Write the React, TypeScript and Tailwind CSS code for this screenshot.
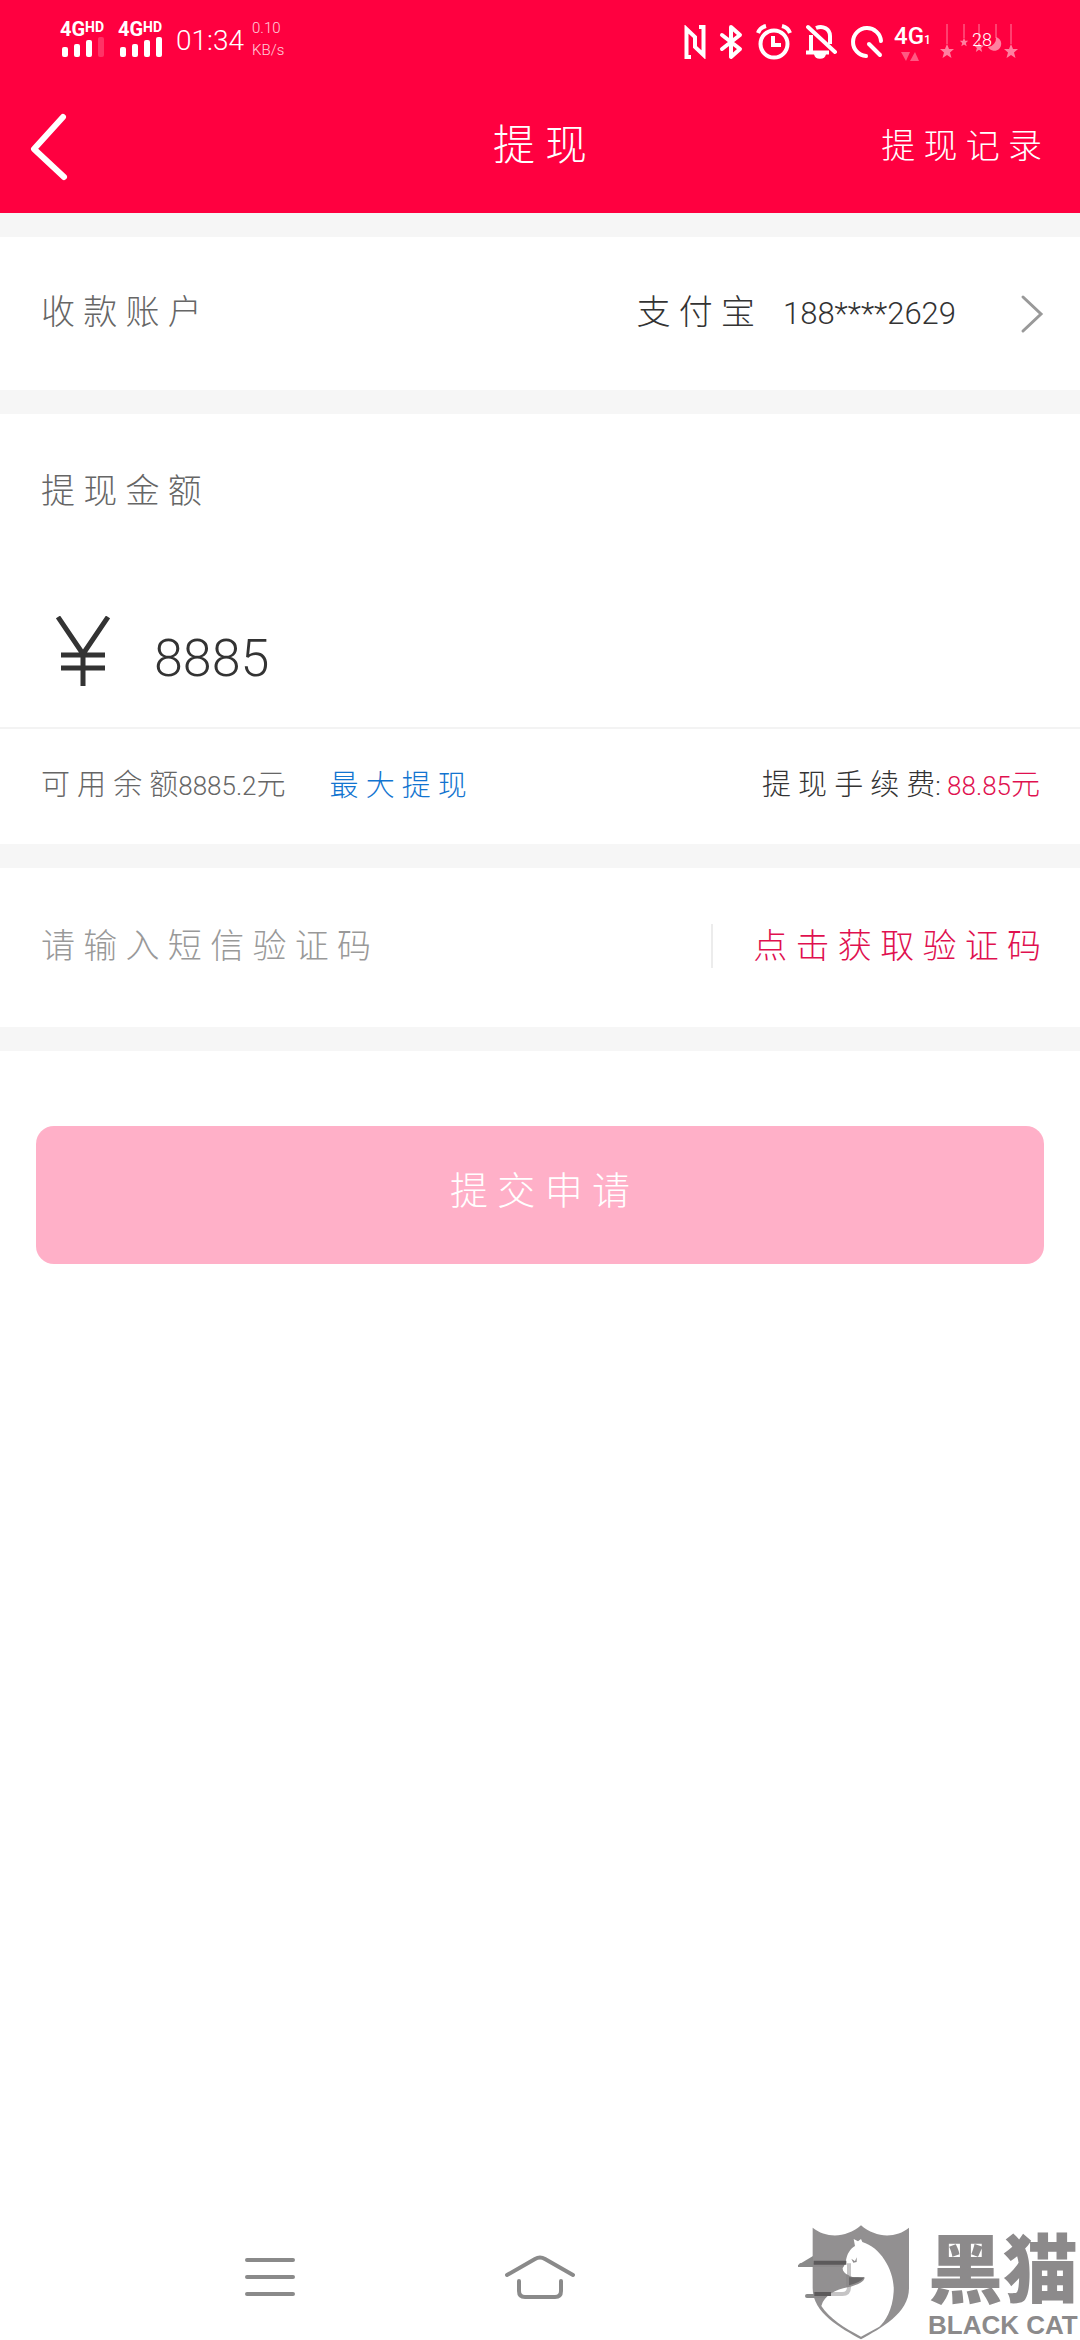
import React, { useState } from "react";

type SignalProps = {
  weak?: boolean;
};

const Signal = ({ weak }: SignalProps) => (
  <div className="flex flex-col w-12">
    <div className="flex items-start font-bold leading-4">
      <span className="text-xl leading-4">4G</span>
      <span className="text-sm leading-3">HD</span>
    </div>
    <svg width="44" height="20" viewBox="0 0 44 20" fill="currentColor">
      <rect x="2" y="10" width="6" height="10" rx="2" />
      <rect x="14" y="7" width="6" height="13" rx="2" />
      <rect x="26" y="3" width="6" height="17" rx="2" />
      <rect x="38" y="0" width="6" height="20" rx="2" opacity={weak ? 0.2 : 1} />
    </svg>
  </div>
);

const NfcIcon = () => (
  <svg width="22" height="34" viewBox="0 0 22 34" fill="none" stroke="currentColor" strokeWidth="4">
    <path d="M7 32H2.500V4L11 12V17" />
    <path d="M15 2H19.500V30L11 22V12" />
  </svg>
);

const BluetoothIcon = () => (
  <svg
    width="24"
    height="36"
    viewBox="0 0 24 36"
    fill="none"
    stroke="currentColor"
    strokeWidth="4"
    strokeLinecap="round"
    strokeLinejoin="round"
  >
    <path d="M3 11L21 25L12 33V3L21 11L3 25" />
  </svg>
);

const AlarmIcon = () => (
  <svg width="36" height="36" viewBox="0 0 36 36" fill="none" stroke="currentColor" strokeWidth="4">
    <circle cx="18" cy="20" r="13.500" />
    <path d="M17 12V21H25" />
    <path d="M2 9C3 6 6 3 10 2M34 9C33 6 30 3 26 2" />
  </svg>
);

const BellOffIcon = () => (
  <svg width="32" height="36" viewBox="0 0 32 36" fill="none" stroke="currentColor" strokeWidth="4">
    <path d="M6 11V27M11 4C18 1 25 5 25 12V20M1 28.500H24" />
    <path d="M3 3L30 28" strokeLinecap="round" />
    <path d="M10 30C11 35 19 35 20 30Z" fill="currentColor" strokeWidth="2" />
  </svg>
);

const DataIcon = () => (
  <svg
    width="34"
    height="34"
    viewBox="0 0 34 34"
    fill="none"
    stroke="currentColor"
    strokeWidth="4"
    strokeLinecap="round"
  >
    <path d="M16 31A14 14 0 1 1 31 16" />
    <path d="M19 19L30 30" />
  </svg>
);

const STAR = "M0 -7L2 -2L7 -2L3 1.500L4.500 7L0 4L-4.500 7L-3 1.500L-7 -2L-2 -2Z";

const Battery = () => (
  <div className="relative w-20 h-9">
    <svg width="80" height="36" viewBox="0 0 80 36" fill="currentColor" opacity="0.5">
      <path d="M7 0V20M24 0V14M39 0V17M56 0V14M71 0V20" stroke="currentColor" strokeWidth="1" />
      <path d={STAR} transform="translate(7 27)" />
      <path d={STAR} transform="translate(24 18) scale(0.6)" />
      <path d={STAR} transform="translate(39 23) scale(0.7)" />
      <path d="M56 13A7 7 0 1 1 48 23A9 9 0 0 0 56 13Z" />
      <path d={STAR} transform="translate(71 27)" />
    </svg>
    <span className="absolute left-8 top-2 text-lg leading-4">28</span>
  </div>
);

const StatusBar = () => (
  <div className="flex justify-between items-start h-20 px-[60px]">
    <div className="flex items-start pt-[21px]">
      <Signal weak />
      <div className="w-[10px]" />
      <Signal />
      <span className="ml-[10px] pt-1 text-[28px] leading-8">01:34</span>
      <div className="ml-2 flex flex-col text-[15px] leading-[22px] opacity-80">
        <span className="-mt-1">0.10</span>
        <span>KB/s</span>
      </div>
    </div>
    <div className="flex items-start pt-6">
      <div className="flex items-center h-9 gap-[13px]">
        <NfcIcon />
        <BluetoothIcon />
        <AlarmIcon />
        <BellOffIcon />
        <DataIcon />
      </div>
      <div className="flex flex-col ml-[10px] w-[46px]">
        <div className="flex items-baseline font-medium">
          <span className="text-2xl leading-6">4G</span>
          <span className="text-xs leading-6">1</span>
        </div>
        <svg width="26" height="9" viewBox="0 0 26 9" fill="currentColor" opacity="0.35">
          <path d="M7 0H16L12 9Z" />
          <path d="M16 9L21 0L25 9Z" />
        </svg>
      </div>
      <Battery />
    </div>
  </div>
);

const Header = () => (
  <header className="bg-[#ff0040] text-white">
    <StatusBar />
    <div className="grid grid-cols-3 items-center h-[133px] px-[30px]">
      <button type="button" aria-label="返回" className="justify-self-start">
        <svg
          width="38"
          height="68"
          viewBox="0 0 38 68"
          fill="none"
          stroke="currentColor"
          strokeWidth="6"
          strokeLinecap="round"
          strokeLinejoin="round"
        >
          <path d="M33 4L4 36L34 64" />
        </svg>
      </button>
      <h1 className="pb-[2px] text-center text-[42px] leading-[60px]">提 现</h1>
      <a href="#records" className="justify-self-end pr-2 pb-[2px] text-[34px] leading-[48px]">
        提 现 记 录
      </a>
    </div>
  </header>
);

const Divider = () => <div className="h-6 bg-[#f6f6f6]" />;

const NavBar = () => (
  <nav className="mt-auto grid grid-cols-3 justify-items-center items-center h-[126px] px-[135px] text-[#8a8a8a]">
    <button type="button" aria-label="菜单">
      <svg width="52" height="40" viewBox="0 0 52 40" stroke="currentColor" strokeWidth="4" strokeLinecap="round">
        <path d="M3 3H49M3 20H49M3 37H49" />
      </svg>
    </button>
    <button type="button" aria-label="主页">
      <svg
        width="72"
        height="44"
        viewBox="0 0 72 44"
        fill="none"
        stroke="currentColor"
        strokeWidth="4"
        strokeLinecap="round"
      >
        <path d="M3 20L31 4Q36 1 41 4L69 20" />
        <path d="M15 26V36Q15 42 21 42H51Q57 42 57 36V26" />
      </svg>
    </button>
    <button type="button" aria-label="后退" className="ml-7">
      <svg width="52" height="44" viewBox="0 0 52 44" fill="none" stroke="currentColor" strokeWidth="4">
        <path d="M0 10L15 1V12H0Z" fill="currentColor" stroke="none" />
        <path d="M3 10H42Q50 10 50 18V33Q50 41 42 41H9" strokeLinecap="round" />
      </svg>
    </button>
  </nav>
);

const Watermark = () => (
  <div className="absolute right-0 bottom-0 flex items-end gap-[18px] pr-[2px] text-[#8c8a8b] pointer-events-none">
    <svg width="98" height="115" viewBox="93 75 294 345">
      <path
        d="M95 83C135 115 195 115 240 76C285 115 345 115 384 83V265C384 340 300 385 240 418C180 385 95 340 95 265Z"
        fill="currentColor"
        opacity="0.95"
      />
      <path
        d="M218 117L231 124L240 117L244 126C300 142 342 215 338 275C335 330 312 365 295 380L240 410C190 384 145 355 121 318C130 285 165 268 200 262C232 254 250 244 251 233C235 233 213 234 203 226C191 221 184 212 185 204C197 192 194 168 204 156C209 147 216 142 222 138Z"
        fill="white"
      />
      <path d="M211 176L222 184L227 172V186L217 188Z" fill="currentColor" />
      <path d="M204 190V262Q204 282 184 282H150" fill="none" stroke="currentColor" strokeWidth="12" opacity="0.5" />
      <path d="M98 188H196M100 282H150" stroke="#5c5a5b" strokeWidth="12" />
      <path d="M204 232H251Q238 248 204 256Z" fill="#6a6869" />
    </svg>
    <div className="flex flex-col items-start">
      <span className="pb-2 font-['Noto_Sans_CJK_SC',sans-serif] text-[75px] leading-[75px] font-black">黑猫</span>
      <span className="font-['Liberation_Sans',sans-serif] text-[26px] leading-[30px] font-bold whitespace-nowrap">
        BLACK CAT
      </span>
    </div>
  </div>
);

export default function App() {
  const [amount, setAmount] = useState("8885");
  const [code, setCode] = useState("");

  return (
    <div className="relative flex flex-col min-h-screen bg-white text-[#333] font-light font-[Roboto,'Noto_Sans_CJK_SC',sans-serif]">
      <Header />
      <main>
        <Divider />
        <button type="button" className="flex items-center w-full h-[153px] pl-[41px] pr-9 text-[34px] leading-[48px]">
          <span className="pb-1 text-[#666]">收 款 账 户</span>
          <span className="ml-auto pb-1">支 付 宝</span>
          <span className="ml-7 text-[31px]">188****2629</span>
          <svg
            className="ml-16"
            width="24"
            height="40"
            viewBox="0 0 24 40"
            fill="none"
            stroke="#999"
            strokeWidth="3"
            strokeLinecap="round"
          >
            <path d="M3 3L21 20L3 37" />
          </svg>
        </button>
        <Divider />

        <section>
          <label htmlFor="amount" className="block pt-[53px] pl-[41px] text-[34px] leading-[48px] text-[#666]">
            提 现 金 额
          </label>
          <div className="flex items-center h-[212px] pt-[60px] pl-14 pr-10">
            <svg width="54" height="70" viewBox="0 0 54 70" fill="none" stroke="currentColor" strokeWidth="5">
              <path d="M2 1L27 38L52 1M27 38V70M5 39H49M5 52H49" />
            </svg>
            <input
              id="amount"
              className="ml-11 flex-1 min-w-0 pt-4 text-[52px] leading-[60px] outline-none"
              value={amount}
              onChange={(e) => setAmount(e.target.value)}
            />
          </div>
          <div className="flex items-center h-[117px] pb-[2px] border-t-2 border-[#f3f3f3] pl-[41px] pr-10 text-[29px] leading-10">
            <p className="text-[#666]">
              可 用 余 额<span className="text-[26px]">8885.2</span>元
            </p>
            <button type="button" className="ml-11 text-[#1274d0]">
              最 大 提 现
            </button>
            <p className="ml-auto">
              提 现 手 续 费<span className="text-[26px]">: </span>
              <span className="text-[#e0104f]">
                <span className="text-[26px]">88.85</span>元
              </span>
            </p>
          </div>
        </section>
        <Divider />

        <div className="flex items-center h-[159px] pb-1 pl-[41px] pr-[39px] text-[34px] leading-[48px]">
          <input
            aria-label="短信验证码"
            className="flex-1 min-w-0 outline-none placeholder:text-[#999]"
            placeholder="请 输 入 短 信 验 证 码"
            value={code}
            onChange={(e) => setCode(e.target.value)}
          />
          <button type="button" className="flex items-center text-[#e0104f]">
            <span className="w-[2px] h-11 mr-10 bg-[#ececec]" />
            点 击 获 取 验 证 码
          </button>
        </div>
        <Divider />

        <div className="px-9 pt-[75px]">
          <button
            type="button"
            className="w-full h-[138px] pb-2 rounded-[18px] bg-[#ffb0c8] text-[38px] leading-[56px] text-white"
          >
            提 交 申 请
          </button>
        </div>
      </main>
      <NavBar />
      <Watermark />
    </div>
  );
}
